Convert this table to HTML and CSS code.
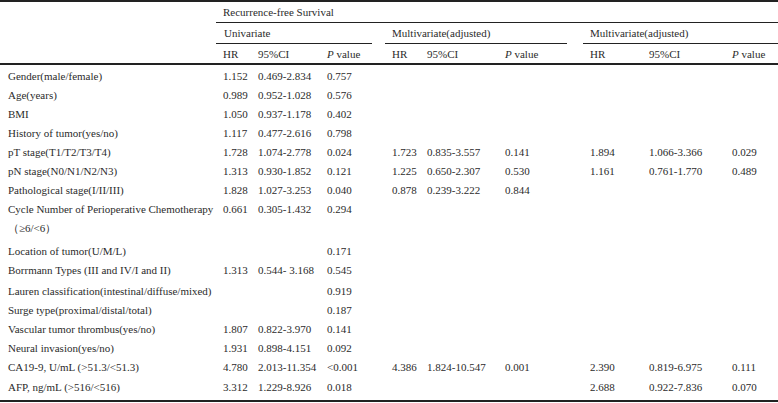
FILE: index.html
```html
<!DOCTYPE html>
<html>
<head>
<meta charset="utf-8">
<link rel="stylesheet" href="styles.css">
</head>
<body>
<table class="rfs">
  <colgroup>
    <col class="c-label">
    <col class="c-hr1"><col class="c-ci1"><col class="c-p1">
    <col class="c-hr2"><col class="c-ci2"><col class="c-p2">
    <col class="c-hr3"><col class="c-ci3"><col class="c-p3">
  </colgroup>
  <thead>
    <tr class="h1">
      <th rowspan="3" class="corner"></th>
      <th colspan="9" class="span-all">Recurrence-free Survival</th>
    </tr>
    <tr class="h2">
      <th colspan="3" class="grp g-uni"><div class="grp-line">Univariate</div></th>
      <th colspan="3" class="grp g-m1"><div class="grp-line">Multivariate(adjusted)</div></th>
      <th colspan="3" class="grp g-m2"><div class="grp-line">Multivariate(adjusted)</div></th>
    </tr>
    <tr class="h3">
      <th>HR</th><th>95%CI</th><th><i>P</i> value</th>
      <th>HR</th><th>95%CI</th><th><i>P</i> value</th>
      <th>HR</th><th>95%CI</th><th><i>P</i> value</th>
    </tr>
  </thead>
  <tbody>
    <tr><td>Gender(male/female)</td><td>1.152</td><td>0.469-2.834</td><td>0.757</td><td></td><td></td><td></td><td></td><td></td><td></td></tr>
    <tr><td>Age(years)</td><td>0.989</td><td>0.952-1.028</td><td>0.576</td><td></td><td></td><td></td><td></td><td></td><td></td></tr>
    <tr><td>BMI</td><td>1.050</td><td>0.937-1.178</td><td>0.402</td><td></td><td></td><td></td><td></td><td></td><td></td></tr>
    <tr><td>History of tumor(yes/no)</td><td>1.117</td><td>0.477-2.616</td><td>0.798</td><td></td><td></td><td></td><td></td><td></td><td></td></tr>
    <tr><td>pT stage(T1/T2/T3/T4)</td><td>1.728</td><td>1.074-2.778</td><td>0.024</td><td>1.723</td><td>0.835-3.557</td><td>0.141</td><td>1.894</td><td>1.066-3.366</td><td>0.029</td></tr>
    <tr><td>pN stage(N0/N1/N2/N3)</td><td>1.313</td><td>0.930-1.852</td><td>0.121</td><td>1.225</td><td>0.650-2.307</td><td>0.530</td><td>1.161</td><td>0.761-1.770</td><td>0.489</td></tr>
    <tr><td>Pathological stage(I/II/III)</td><td>1.828</td><td>1.027-3.253</td><td>0.040</td><td>0.878</td><td>0.239-3.222</td><td>0.844</td><td></td><td></td><td></td></tr>
    <tr class="tall"><td>Cycle Number of Perioperative Chemotherapy<br>（≥6/&lt;6）</td><td>0.661</td><td>0.305-1.432</td><td>0.294</td><td></td><td></td><td></td><td></td><td></td><td></td></tr>
    <tr><td>Location of tumor(U/M/L)</td><td></td><td></td><td>0.171</td><td></td><td></td><td></td><td></td><td></td><td></td></tr>
    <tr><td>Borrmann Types (III and IV/I and II)</td><td>1.313</td><td>0.544- 3.168</td><td>0.545</td><td></td><td></td><td></td><td></td><td></td><td></td></tr>
    <tr class="gap"><td>Lauren classification(intestinal/diffuse/mixed)</td><td></td><td></td><td>0.919</td><td></td><td></td><td></td><td></td><td></td><td></td></tr>
    <tr><td>Surge type(proximal/distal/total)</td><td></td><td></td><td>0.187</td><td></td><td></td><td></td><td></td><td></td><td></td></tr>
    <tr><td>Vascular tumor thrombus(yes/no)</td><td>1.807</td><td>0.822-3.970</td><td>0.141</td><td></td><td></td><td></td><td></td><td></td><td></td></tr>
    <tr><td>Neural invasion(yes/no)</td><td>1.931</td><td>0.898-4.151</td><td>0.092</td><td></td><td></td><td></td><td></td><td></td><td></td></tr>
    <tr><td>CA19-9, U/mL (&gt;51.3/&lt;51.3)</td><td>4.780</td><td>2.013-11.354</td><td>&lt;0.001</td><td>4.386</td><td>1.824-10.547</td><td>0.001</td><td>2.390</td><td>0.819-6.975</td><td>0.111</td></tr>
    <tr class="last"><td>AFP, ng/mL (&gt;516/&lt;516)</td><td>3.312</td><td>1.229-8.926</td><td>0.018</td><td></td><td></td><td></td><td>2.688</td><td>0.922-7.836</td><td>0.070</td></tr>
  </tbody>
</table>
</body>
</html>
```
FILE: styles.css
```css
html, body {
  margin: 0;
  padding: 0;
  background: #ffffff;
}

.rfs {
  width: 778px;
  table-layout: fixed;
  border-collapse: collapse;
  font-family: "Liberation Serif", "Times New Roman", serif;
  font-size: 11px;
  color: #2b2b2b;
  border-top: 2px solid #222;
  border-bottom: 2px solid #222;
}

.c-label { width: 216px; }
.c-hr1 { width: 35px; }
.c-ci1 { width: 69px; }
.c-p1 { width: 65px; }
.c-hr2 { width: 35px; }
.c-ci2 { width: 78px; }
.c-p2 { width: 85px; }
.c-hr3 { width: 59px; }
.c-ci3 { width: 83px; }
.c-p3 { width: 53px; }

.rfs th,
.rfs td {
  padding: 0 0 0 7px;
  text-align: left;
  font-weight: normal;
  white-space: nowrap;
  vertical-align: middle;
}

.rfs td:first-child {
  padding-left: 8px;
}

.h1 th {
  height: 20px;
}

.span-all {
  border-bottom: 1px solid #222;
  padding-left: 8px;
}

.h2 .grp {
  padding: 0;
  height: 21px;
}

.g-uni { padding-right: 13px !important; }
.g-m1 { padding-right: 16px !important; }

.grp-line {
  height: 20px;
  line-height: 20px;
  border-bottom: 1.5px solid #222;
  padding-left: 7px;
}

.g-uni .grp-line { padding-left: 8px; }

.h3 th {
  height: 19px;
  border-bottom: 2px solid #222;
}

.corner {
  border-bottom: 2px solid #222;
}

.rfs tbody td {
  height: 19.05px;
  line-height: 19.05px;
}

.rfs tbody tr:first-child td {
  padding-top: 2px;
}

.rfs tbody tr.tall td:first-child {
  white-space: normal;
}

.rfs tbody tr.tall td {
  vertical-align: top;
  padding-bottom: 4px;
}

.rfs tbody tr.gap td {
  padding-top: 1px;
}

.rfs tbody tr.last td {
  padding-top: 1px;
  padding-bottom: 3px;
}
```
